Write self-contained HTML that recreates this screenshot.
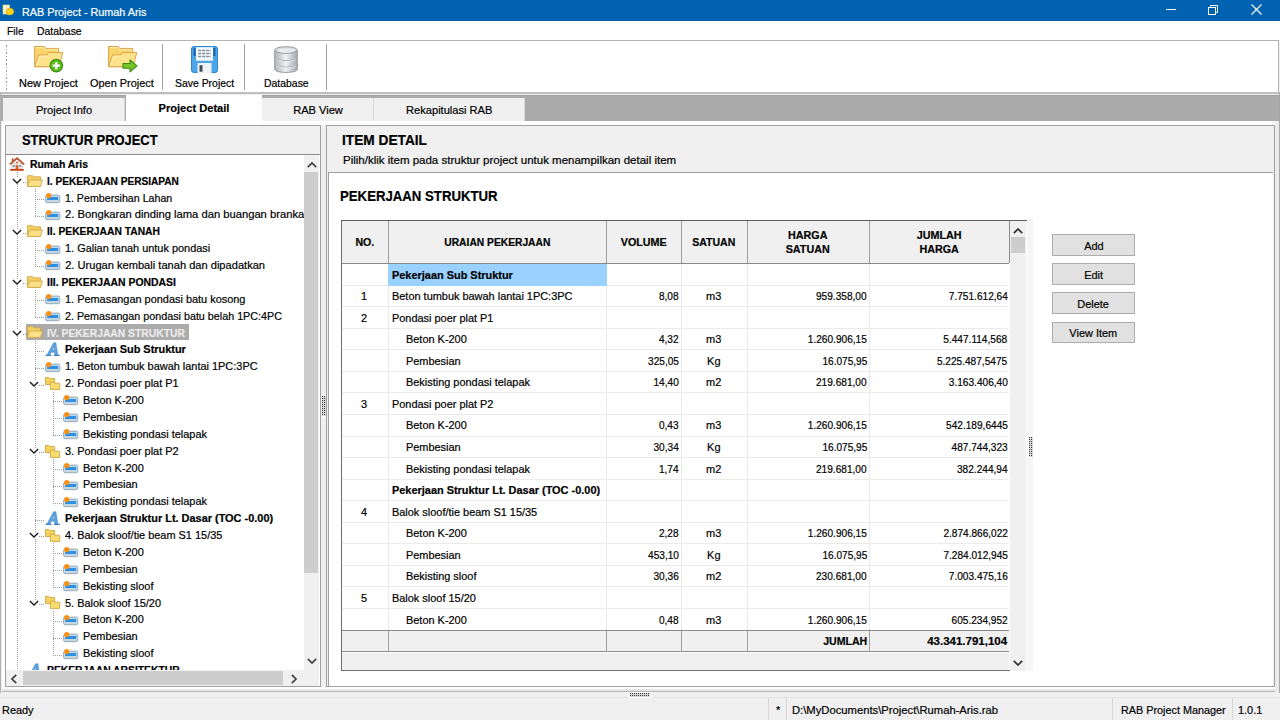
<!DOCTYPE html>
<html><head><meta charset="utf-8"><style>
*{margin:0;padding:0;box-sizing:border-box}
html,body{width:1280px;height:720px;overflow:hidden;background:#f0f0f0;font-family:"Liberation Sans",sans-serif;font-size:11.1px;color:#000}
.a{position:absolute}
.t{position:absolute;white-space:nowrap;line-height:1;-webkit-text-stroke:0.2px currentColor}
svg{display:block}
</style></head><body>
<div class="a" style="left:0px;top:0px;width:1280px;height:21px;background:#0062b0"></div>
<svg class="a" style="left:2px;top:4px" width="14" height="12" viewBox="0 0 14 12">
<rect x="1" y="1" width="6.5" height="9" fill="#fbf3c4" stroke="#e8d890" stroke-width="0.6"/>
<ellipse cx="7.8" cy="7.6" rx="3.9" ry="3.4" fill="#f6d21a" stroke="#e0a810" stroke-width="0.6"/></svg>
<div class="t" style="left:22px;top:6.5px;color:#fff"><span style="display:inline-block;transform:scaleX(0.975);transform-origin:0 50%">RAB Project - Rumah Aris</span></div>
<div class="a" style="left:1166px;top:9px;width:10px;height:1px;background:#fff"></div>
<svg class="a" style="left:1207px;top:4px" width="12" height="11" viewBox="0 0 12 11">
<rect x="1.5" y="3.5" width="7" height="7" fill="none" stroke="#fff"/><path d="M3.5 3.5V1.5h7v7h-2" fill="none" stroke="#fff"/></svg>
<svg class="a" style="left:1251px;top:4px" width="11" height="11" viewBox="0 0 11 11">
<path d="M0.5 0.5L10.5 10.5M10.5 0.5L0.5 10.5" stroke="#fff" stroke-width="1.1"/></svg>
<div class="a" style="left:0px;top:21px;width:1280px;height:19px;background:#fff"></div>
<div class="t" style="left:7px;top:26.1px"><span style="display:inline-block;transform:scaleX(0.93);transform-origin:0 50%">File</span></div>
<div class="t" style="left:37px;top:26.1px"><span style="display:inline-block;transform:scaleX(0.94);transform-origin:0 50%">Database</span></div>
<div class="a" style="left:0px;top:40px;width:1279px;height:52px;background:#fff;border-top:1px solid #b4b4b4;border-right:1px solid #b4b4b4"></div>
<div class="a" style="left:0px;top:92px;width:1280px;height:2px;background:#bebebe"></div>
<div class="a" style="left:6px;top:45px;width:1px;height:1.6px;background:#9a9a9a"></div>
<div class="a" style="left:6px;top:48.6px;width:1px;height:1.6px;background:#9a9a9a"></div>
<div class="a" style="left:6px;top:52.2px;width:1px;height:1.6px;background:#9a9a9a"></div>
<div class="a" style="left:6px;top:55.8px;width:1px;height:1.6px;background:#9a9a9a"></div>
<div class="a" style="left:6px;top:59.4px;width:1px;height:1.6px;background:#9a9a9a"></div>
<div class="a" style="left:6px;top:63px;width:1px;height:1.6px;background:#9a9a9a"></div>
<div class="a" style="left:6px;top:66.6px;width:1px;height:1.6px;background:#9a9a9a"></div>
<div class="a" style="left:6px;top:70.2px;width:1px;height:1.6px;background:#9a9a9a"></div>
<div class="a" style="left:6px;top:73.8px;width:1px;height:1.6px;background:#9a9a9a"></div>
<div class="a" style="left:6px;top:77.4px;width:1px;height:1.6px;background:#9a9a9a"></div>
<div class="a" style="left:6px;top:81px;width:1px;height:1.6px;background:#9a9a9a"></div>
<div class="a" style="left:6px;top:84.6px;width:1px;height:1.6px;background:#9a9a9a"></div>
<div class="a" style="left:6px;top:88.2px;width:1px;height:1.6px;background:#9a9a9a"></div>
<div class="a" style="left:162px;top:44px;width:1px;height:46px;background:#a0a0a0"></div>
<div class="a" style="left:244px;top:44px;width:1px;height:46px;background:#a0a0a0"></div>
<div class="a" style="left:326px;top:44px;width:1px;height:46px;background:#a0a0a0"></div>
<div class="t" style="left:19px;top:77.8px"><span style="display:inline-block;transform:scaleX(0.985);transform-origin:0 50%">New Project</span></div>
<div class="t" style="left:90px;top:77.8px"><span style="display:inline-block;transform:scaleX(0.985);transform-origin:0 50%">Open Project</span></div>
<div class="t" style="left:174.5px;top:77.8px"><span style="display:inline-block;transform:scaleX(0.94);transform-origin:0 50%">Save Project</span></div>
<div class="t" style="left:263.5px;top:77.8px"><span style="display:inline-block;transform:scaleX(0.94);transform-origin:0 50%">Database</span></div>
<svg class="a" style="left:34px;top:45px" width="31" height="29" viewBox="0 0 31 29"><path d="M0.6 1.5h9.6l1.6 1.9h12.9v18.3H0.6z" fill="#f8d46a" stroke="#dca548" stroke-width="1"/>
<path d="M1.8 2.7h8l1.6 1.9h12v3" fill="none" stroke="#fdeeb8" stroke-width="1"/>
<path d="M0.6 21.7L4.6 10h8.2l1.4-2.4h14.6L25 21.7z" fill="#fde38c" stroke="#dca548" stroke-width="1"/>
<path d="M2.2 20.5L5.4 11.2h8" fill="none" stroke="#fff3c8" stroke-width="0.9"/>
<circle cx="22.3" cy="20.6" r="6.3" fill="#5cb81c" stroke="#3a8a10" stroke-width="1.1"/>
<path d="M22.3 16.9v7.4M18.6 20.6h7.4" stroke="#fff" stroke-width="2.3"/></svg>
<svg class="a" style="left:108px;top:45px" width="31" height="29" viewBox="0 0 31 29"><path d="M0.6 1.5h9.6l1.6 1.9h12.9v18.3H0.6z" fill="#f8d46a" stroke="#dca548" stroke-width="1"/>
<path d="M1.8 2.7h8l1.6 1.9h12v3" fill="none" stroke="#fdeeb8" stroke-width="1"/>
<path d="M0.6 21.7L4.6 10h8.2l1.4-2.4h14.6L25 21.7z" fill="#fde38c" stroke="#dca548" stroke-width="1"/>
<path d="M2.2 20.5L5.4 11.2h8" fill="none" stroke="#fff3c8" stroke-width="0.9"/>
<path d="M15 18.5h7v-3.6l7 6-7 6v-3.6h-7z" fill="#74c42a" stroke="#3a8a10" stroke-width="1.1" stroke-linejoin="round"/></svg>
<svg class="a" style="left:191px;top:45.5px" width="27" height="27" viewBox="0 0 27 27">
<rect x="0.5" y="0.5" width="26" height="26" rx="2.5" fill="#4aa6e8" stroke="#2f86cc"/>
<rect x="2.5" y="2" width="2.2" height="8" fill="#1f62a8"/><rect x="22.3" y="2" width="2.2" height="8" fill="#1f62a8"/>
<rect x="5" y="1.2" width="17" height="13.5" fill="#f7fafc"/>
<path d="M7 4.5h13M7 7.5h13M7 10.5h13" stroke="#7f8f9c" stroke-width="1.3" stroke-dasharray="3.2 0.9"/>
<rect x="6.5" y="17" width="14" height="10" fill="#eef2f5"/>
<rect x="8.5" y="19.2" width="3" height="6.5" fill="#3e4a54"/></svg>
<svg class="a" style="left:274px;top:46px" width="24" height="27" viewBox="0 0 24 27">
<defs><linearGradient id="dg" x1="0" x2="1"><stop offset="0" stop-color="#b0b5ba"/><stop offset="0.5" stop-color="#eef0f2"/><stop offset="1" stop-color="#a4a9ae"/></linearGradient></defs>
<path d="M0.7 4v19.2c0 2 5 3.2 11.3 3.2s11.3-1.2 11.3-3.2V4" fill="url(#dg)" stroke="#8f9499" stroke-width="0.9"/>
<ellipse cx="12" cy="4" rx="11.3" ry="3.3" fill="#d8dcdf" stroke="#8f9499" stroke-width="0.9"/>
<ellipse cx="12" cy="4.6" rx="9" ry="2" fill="#e9ecee"/>
<path d="M0.7 11.4c0 2 5 3.2 11.3 3.2s11.3-1.2 11.3-3.2M0.7 18c0 2 5 3.2 11.3 3.2s11.3-1.2 11.3-3.2" fill="none" stroke="#8f9499" stroke-width="1"/>
<path d="M1.5 12.6c1.5 1.6 5 2.6 10.5 2.6s9-1 10.5-2.6M1.5 19.2c1.5 1.6 5 2.6 10.5 2.6s9-1 10.5-2.6" fill="none" stroke="#f4f6f7" stroke-width="0.8"/></svg>
<div class="a" style="left:0px;top:94px;width:1280px;height:1px;background:#eeeeee"></div>
<div class="a" style="left:0px;top:95px;width:1280px;height:26px;background:#ababab"></div>
<div class="a" style="left:0px;top:95px;width:1280px;height:1px;background:#a2a2a2"></div>
<div class="a" style="left:0px;top:93px;width:1.3px;height:600px;background:#b0b0b0"></div>
<div class="a" style="left:3px;top:97.5px;width:122px;height:23.5px;background:#f0f0f0;border-right:1px solid #d9d9d9"></div>
<div class="t" style="left:3px;top:105.1px;width:122px;text-align:center">Project Info</div>
<div class="a" style="left:126px;top:95px;width:136px;height:28px;background:#fff"></div>
<div class="t" style="left:126px;top:103.3px;width:136px;text-align:center;font-weight:bold">Project Detail</div>
<div class="a" style="left:262px;top:97.5px;width:112px;height:23.5px;background:#f0f0f0;border-right:1px solid #d9d9d9"></div>
<div class="t" style="left:262px;top:105.1px;width:112px;text-align:center">RAB View</div>
<div class="a" style="left:374px;top:97.5px;width:150.5px;height:23.5px;background:#f0f0f0;border-right:1px solid #d9d9d9"></div>
<div class="t" style="left:374px;top:105.1px;width:150.5px;text-align:center">Rekapitulasi RAB</div>
<div class="a" style="left:2px;top:121px;width:1277px;height:571px;background:#fff;border-bottom:1px solid #b8b8b8"></div>
<div class="a" style="left:2px;top:689px;width:1277px;height:2px;background:#e6e6e6"></div>
<div class="a" style="left:5px;top:125px;width:316px;height:562px;background:#fff;border:1px solid #a0a0a0"></div>
<div class="a" style="left:6px;top:126px;width:314px;height:29px;background:#f0f0f0;border-bottom:1px solid #8c8c8c"></div>
<div class="t" style="left:22px;top:132.9px;font-size:14.1px;font-weight:bold"><span style="display:inline-block;transform:scaleX(0.916);transform-origin:0 50%">STRUKTUR PROJECT</span></div>
<div class="a" style="left:6px;top:155px;width:298px;height:515px;overflow:hidden">
<div class="a" style="left:11.1px;top:17.18px;width:1px;height:499.31px;background-image:linear-gradient(#9c9c9c 50%,transparent 50%);background-size:1px 2px"></div>
<div class="a" style="left:28.9px;top:34.05px;width:1px;height:26.81px;background-image:linear-gradient(#9c9c9c 50%,transparent 50%);background-size:1px 2px"></div>
<div class="a" style="left:28.9px;top:84.68px;width:1px;height:26.81px;background-image:linear-gradient(#9c9c9c 50%,transparent 50%);background-size:1px 2px"></div>
<div class="a" style="left:28.9px;top:135.3px;width:1px;height:26.81px;background-image:linear-gradient(#9c9c9c 50%,transparent 50%);background-size:1px 2px"></div>
<div class="a" style="left:28.9px;top:185.93px;width:1px;height:263.06px;background-image:linear-gradient(#9c9c9c 50%,transparent 50%);background-size:1px 2px"></div>
<div class="a" style="left:46.7px;top:236.55px;width:1px;height:43.69px;background-image:linear-gradient(#9c9c9c 50%,transparent 50%);background-size:1px 2px"></div>
<div class="a" style="left:46.7px;top:304.05px;width:1px;height:43.69px;background-image:linear-gradient(#9c9c9c 50%,transparent 50%);background-size:1px 2px"></div>
<div class="a" style="left:46.7px;top:388.42px;width:1px;height:43.69px;background-image:linear-gradient(#9c9c9c 50%,transparent 50%);background-size:1px 2px"></div>
<div class="a" style="left:46.7px;top:455.92px;width:1px;height:43.69px;background-image:linear-gradient(#9c9c9c 50%,transparent 50%);background-size:1px 2px"></div>
<div class="a" style="left:11.1px;top:27.11px;width:9.8px;height:1px;background-image:linear-gradient(90deg,#9c9c9c 50%,transparent 50%);background-size:2px 1px"></div>
<div class="a" style="left:28.9px;top:43.99px;width:9.8px;height:1px;background-image:linear-gradient(90deg,#9c9c9c 50%,transparent 50%);background-size:2px 1px"></div>
<div class="a" style="left:28.9px;top:60.86px;width:9.8px;height:1px;background-image:linear-gradient(90deg,#9c9c9c 50%,transparent 50%);background-size:2px 1px"></div>
<div class="a" style="left:11.1px;top:77.74px;width:9.8px;height:1px;background-image:linear-gradient(90deg,#9c9c9c 50%,transparent 50%);background-size:2px 1px"></div>
<div class="a" style="left:28.9px;top:94.61px;width:9.8px;height:1px;background-image:linear-gradient(90deg,#9c9c9c 50%,transparent 50%);background-size:2px 1px"></div>
<div class="a" style="left:28.9px;top:111.49px;width:9.8px;height:1px;background-image:linear-gradient(90deg,#9c9c9c 50%,transparent 50%);background-size:2px 1px"></div>
<div class="a" style="left:11.1px;top:128.36px;width:9.8px;height:1px;background-image:linear-gradient(90deg,#9c9c9c 50%,transparent 50%);background-size:2px 1px"></div>
<div class="a" style="left:28.9px;top:145.24px;width:9.8px;height:1px;background-image:linear-gradient(90deg,#9c9c9c 50%,transparent 50%);background-size:2px 1px"></div>
<div class="a" style="left:28.9px;top:162.11px;width:9.8px;height:1px;background-image:linear-gradient(90deg,#9c9c9c 50%,transparent 50%);background-size:2px 1px"></div>
<div class="a" style="left:11.1px;top:178.99px;width:9.8px;height:1px;background-image:linear-gradient(90deg,#9c9c9c 50%,transparent 50%);background-size:2px 1px"></div>
<div class="a" style="left:28.9px;top:195.86px;width:9.8px;height:1px;background-image:linear-gradient(90deg,#9c9c9c 50%,transparent 50%);background-size:2px 1px"></div>
<div class="a" style="left:28.9px;top:212.74px;width:9.8px;height:1px;background-image:linear-gradient(90deg,#9c9c9c 50%,transparent 50%);background-size:2px 1px"></div>
<div class="a" style="left:28.9px;top:229.61px;width:9.8px;height:1px;background-image:linear-gradient(90deg,#9c9c9c 50%,transparent 50%);background-size:2px 1px"></div>
<div class="a" style="left:46.7px;top:246.49px;width:9.8px;height:1px;background-image:linear-gradient(90deg,#9c9c9c 50%,transparent 50%);background-size:2px 1px"></div>
<div class="a" style="left:46.7px;top:263.36px;width:9.8px;height:1px;background-image:linear-gradient(90deg,#9c9c9c 50%,transparent 50%);background-size:2px 1px"></div>
<div class="a" style="left:46.7px;top:280.24px;width:9.8px;height:1px;background-image:linear-gradient(90deg,#9c9c9c 50%,transparent 50%);background-size:2px 1px"></div>
<div class="a" style="left:28.9px;top:297.11px;width:9.8px;height:1px;background-image:linear-gradient(90deg,#9c9c9c 50%,transparent 50%);background-size:2px 1px"></div>
<div class="a" style="left:46.7px;top:313.99px;width:9.8px;height:1px;background-image:linear-gradient(90deg,#9c9c9c 50%,transparent 50%);background-size:2px 1px"></div>
<div class="a" style="left:46.7px;top:330.86px;width:9.8px;height:1px;background-image:linear-gradient(90deg,#9c9c9c 50%,transparent 50%);background-size:2px 1px"></div>
<div class="a" style="left:46.7px;top:347.74px;width:9.8px;height:1px;background-image:linear-gradient(90deg,#9c9c9c 50%,transparent 50%);background-size:2px 1px"></div>
<div class="a" style="left:28.9px;top:364.61px;width:9.8px;height:1px;background-image:linear-gradient(90deg,#9c9c9c 50%,transparent 50%);background-size:2px 1px"></div>
<div class="a" style="left:28.9px;top:381.49px;width:9.8px;height:1px;background-image:linear-gradient(90deg,#9c9c9c 50%,transparent 50%);background-size:2px 1px"></div>
<div class="a" style="left:46.7px;top:398.36px;width:9.8px;height:1px;background-image:linear-gradient(90deg,#9c9c9c 50%,transparent 50%);background-size:2px 1px"></div>
<div class="a" style="left:46.7px;top:415.24px;width:9.8px;height:1px;background-image:linear-gradient(90deg,#9c9c9c 50%,transparent 50%);background-size:2px 1px"></div>
<div class="a" style="left:46.7px;top:432.11px;width:9.8px;height:1px;background-image:linear-gradient(90deg,#9c9c9c 50%,transparent 50%);background-size:2px 1px"></div>
<div class="a" style="left:28.9px;top:448.99px;width:9.8px;height:1px;background-image:linear-gradient(90deg,#9c9c9c 50%,transparent 50%);background-size:2px 1px"></div>
<div class="a" style="left:46.7px;top:465.86px;width:9.8px;height:1px;background-image:linear-gradient(90deg,#9c9c9c 50%,transparent 50%);background-size:2px 1px"></div>
<div class="a" style="left:46.7px;top:482.74px;width:9.8px;height:1px;background-image:linear-gradient(90deg,#9c9c9c 50%,transparent 50%);background-size:2px 1px"></div>
<div class="a" style="left:46.7px;top:499.61px;width:9.8px;height:1px;background-image:linear-gradient(90deg,#9c9c9c 50%,transparent 50%);background-size:2px 1px"></div>
<div class="a" style="left:11.1px;top:516.49px;width:9.8px;height:1px;background-image:linear-gradient(90deg,#9c9c9c 50%,transparent 50%);background-size:2px 1px"></div>
<div class="a" style="left:3.1px;top:1.74px"><svg width="16" height="14" viewBox="0 0 16 14"><path d="M2.8 6.5h10.4V12H2.8z" fill="#f6f1ea" stroke="#cdb49a" stroke-width="0.6"/><path d="M0.8 7.4L8 1.2l7.2 6.2" fill="none" stroke="#b4552b" stroke-width="1.8"/><rect x="2.8" y="1.4" width="1.8" height="3.4" fill="#b4552b"/><rect x="6.6" y="8" width="2.8" height="4" fill="#d9652b"/><rect x="3.8" y="8" width="2" height="2" fill="#6f94bd"/><rect x="10.2" y="8" width="2" height="2" fill="#6f94bd"/><circle cx="8" cy="5.3" r="0.9" fill="#c23a2a"/><rect x="1.2" y="12" width="13.6" height="1.8" fill="#c7461f"/></svg></div>
<div class="t" style="left:23.6px;top:0.8px;font-weight:bold;line-height:16.88px"><span style="display:inline-block;transform:scaleX(0.938);transform-origin:0 50%">Rumah Aris</span></div>
<div class="a" style="left:20.9px;top:19.61px"><svg width="16" height="12" viewBox="0 0 16 12"><path d="M0.5 0.6h5.2l1.2 1.2h6.6v9.6H0.5z" fill="#f3cf62" stroke="#cfa342" stroke-width="0.8"/><path d="M0.5 11.4l2.1-6.4h12.9l-2 6.4z" fill="#fbe08a" stroke="#cfa342" stroke-width="0.8"/></svg></div>
<div class="a" style="left:5.6px;top:23.11px;background:#fff"><svg width="10" height="6" viewBox="0 0 10 6"><path d="M0.9 0.9L5 5 9.1 0.9" fill="none" stroke="#1e1e1e" stroke-width="1.4"/></svg></div>
<div class="t" style="left:41.4px;top:17.68px;font-weight:bold;line-height:16.88px"><span style="display:inline-block;transform:scaleX(0.912);transform-origin:0 50%">I. PEKERJAAN PERSIAPAN</span></div>
<div class="a" style="left:38.7px;top:36.99px"><svg width="16" height="12" viewBox="0 0 16 12"><rect x="0.6" y="3.1" width="14.2" height="7.6" rx="1.4" fill="#c4d6e2" stroke="#8ea4b4" stroke-width="0.9"/><rect x="1.5" y="4" width="12.4" height="4" fill="#d8f0fb"/><rect x="2.1" y="4.8" width="11.2" height="3.2" fill="#2f8fe0"/><circle cx="3.7" cy="3.6" r="2.6" fill="#fb8f12"/></svg></div>
<div class="t" style="left:59.2px;top:34.55px;line-height:16.88px"><span style="display:inline-block;transform:scaleX(0.961);transform-origin:0 50%">1. Pembersihan Lahan</span></div>
<div class="a" style="left:38.7px;top:53.86px"><svg width="16" height="12" viewBox="0 0 16 12"><rect x="0.6" y="3.1" width="14.2" height="7.6" rx="1.4" fill="#c4d6e2" stroke="#8ea4b4" stroke-width="0.9"/><rect x="1.5" y="4" width="12.4" height="4" fill="#d8f0fb"/><rect x="2.1" y="4.8" width="11.2" height="3.2" fill="#2f8fe0"/><circle cx="3.7" cy="3.6" r="2.6" fill="#fb8f12"/></svg></div>
<div class="t" style="left:59.2px;top:51.43px;line-height:16.88px"><span style="display:inline-block;transform:scaleX(1.01);transform-origin:0 50%">2. Bongkaran dinding lama dan buangan branka</span></div>
<div class="a" style="left:20.9px;top:70.24px"><svg width="16" height="12" viewBox="0 0 16 12"><path d="M0.5 0.6h5.2l1.2 1.2h6.6v9.6H0.5z" fill="#f3cf62" stroke="#cfa342" stroke-width="0.8"/><path d="M0.5 11.4l2.1-6.4h12.9l-2 6.4z" fill="#fbe08a" stroke="#cfa342" stroke-width="0.8"/></svg></div>
<div class="a" style="left:5.6px;top:73.74px;background:#fff"><svg width="10" height="6" viewBox="0 0 10 6"><path d="M0.9 0.9L5 5 9.1 0.9" fill="none" stroke="#1e1e1e" stroke-width="1.4"/></svg></div>
<div class="t" style="left:41.4px;top:68.3px;font-weight:bold;line-height:16.88px"><span style="display:inline-block;transform:scaleX(0.927);transform-origin:0 50%">II. PEKERJAAN TANAH</span></div>
<div class="a" style="left:38.7px;top:87.61px"><svg width="16" height="12" viewBox="0 0 16 12"><rect x="0.6" y="3.1" width="14.2" height="7.6" rx="1.4" fill="#c4d6e2" stroke="#8ea4b4" stroke-width="0.9"/><rect x="1.5" y="4" width="12.4" height="4" fill="#d8f0fb"/><rect x="2.1" y="4.8" width="11.2" height="3.2" fill="#2f8fe0"/><circle cx="3.7" cy="3.6" r="2.6" fill="#fb8f12"/></svg></div>
<div class="t" style="left:59.2px;top:85.18px;line-height:16.88px"><span style="display:inline-block;transform:scaleX(0.985);transform-origin:0 50%">1. Galian tanah untuk pondasi</span></div>
<div class="a" style="left:38.7px;top:104.49px"><svg width="16" height="12" viewBox="0 0 16 12"><rect x="0.6" y="3.1" width="14.2" height="7.6" rx="1.4" fill="#c4d6e2" stroke="#8ea4b4" stroke-width="0.9"/><rect x="1.5" y="4" width="12.4" height="4" fill="#d8f0fb"/><rect x="2.1" y="4.8" width="11.2" height="3.2" fill="#2f8fe0"/><circle cx="3.7" cy="3.6" r="2.6" fill="#fb8f12"/></svg></div>
<div class="t" style="left:59.2px;top:102.05px;line-height:16.88px">2. Urugan kembali tanah dan dipadatkan</div>
<div class="a" style="left:20.9px;top:120.86px"><svg width="16" height="12" viewBox="0 0 16 12"><path d="M0.5 0.6h5.2l1.2 1.2h6.6v9.6H0.5z" fill="#f3cf62" stroke="#cfa342" stroke-width="0.8"/><path d="M0.5 11.4l2.1-6.4h12.9l-2 6.4z" fill="#fbe08a" stroke="#cfa342" stroke-width="0.8"/></svg></div>
<div class="a" style="left:5.6px;top:124.36px;background:#fff"><svg width="10" height="6" viewBox="0 0 10 6"><path d="M0.9 0.9L5 5 9.1 0.9" fill="none" stroke="#1e1e1e" stroke-width="1.4"/></svg></div>
<div class="t" style="left:41.4px;top:118.93px;font-weight:bold;line-height:16.88px"><span style="display:inline-block;transform:scaleX(0.938);transform-origin:0 50%">III. PEKERJAAN PONDASI</span></div>
<div class="a" style="left:38.7px;top:138.24px"><svg width="16" height="12" viewBox="0 0 16 12"><rect x="0.6" y="3.1" width="14.2" height="7.6" rx="1.4" fill="#c4d6e2" stroke="#8ea4b4" stroke-width="0.9"/><rect x="1.5" y="4" width="12.4" height="4" fill="#d8f0fb"/><rect x="2.1" y="4.8" width="11.2" height="3.2" fill="#2f8fe0"/><circle cx="3.7" cy="3.6" r="2.6" fill="#fb8f12"/></svg></div>
<div class="t" style="left:59.2px;top:135.8px;line-height:16.88px"><span style="display:inline-block;transform:scaleX(0.985);transform-origin:0 50%">1. Pemasangan pondasi batu kosong</span></div>
<div class="a" style="left:38.7px;top:155.11px"><svg width="16" height="12" viewBox="0 0 16 12"><rect x="0.6" y="3.1" width="14.2" height="7.6" rx="1.4" fill="#c4d6e2" stroke="#8ea4b4" stroke-width="0.9"/><rect x="1.5" y="4" width="12.4" height="4" fill="#d8f0fb"/><rect x="2.1" y="4.8" width="11.2" height="3.2" fill="#2f8fe0"/><circle cx="3.7" cy="3.6" r="2.6" fill="#fb8f12"/></svg></div>
<div class="t" style="left:59.2px;top:152.68px;line-height:16.88px"><span style="display:inline-block;transform:scaleX(0.969);transform-origin:0 50%">2. Pemasangan pondasi batu belah 1PC:4PC</span></div>
<div class="a" style="left:19.5px;top:169.35px;width:163.5px;height:15.68px;background:#ababab"></div>
<div class="a" style="left:20.9px;top:171.49px"><svg width="16" height="12" viewBox="0 0 16 12"><path d="M0.5 0.6h5.2l1.2 1.2h6.6v9.6H0.5z" fill="#f3cf62" stroke="#cfa342" stroke-width="0.8"/><path d="M0.5 11.4l2.1-6.4h12.9l-2 6.4z" fill="#fbe08a" stroke="#cfa342" stroke-width="0.8"/></svg></div>
<div class="a" style="left:5.6px;top:174.99px;background:#fff"><svg width="10" height="6" viewBox="0 0 10 6"><path d="M0.9 0.9L5 5 9.1 0.9" fill="none" stroke="#1e1e1e" stroke-width="1.4"/></svg></div>
<div class="t" style="left:41.4px;top:169.55px;font-weight:bold;color:#ececec;line-height:16.88px"><span style="display:inline-block;transform:scaleX(0.931);transform-origin:0 50%">IV. PEKERJAAN STRUKTUR</span></div>
<div class="a" style="left:38.7px;top:187.36px"><svg width="16" height="14" viewBox="0 0 16 14"><path d="M1.8 13.3L8.6 0.8h2.3l1.9 12.5H9.9l-0.45-3.1H6.3l-1.6 3.1zM7.3 8.1h2l-0.55-4.3z" fill="#5da3e3" stroke="#3c80c6" stroke-width="0.5"/><path d="M0.6 13.4h6M8.8 13.4h6" stroke="#3c80c6" stroke-width="1.1"/></svg></div>
<div class="t" style="left:59.2px;top:186.43px;font-weight:bold;line-height:16.88px"><span style="display:inline-block;transform:scaleX(0.985);transform-origin:0 50%">Pekerjaan Sub Struktur</span></div>
<div class="a" style="left:38.7px;top:205.74px"><svg width="16" height="12" viewBox="0 0 16 12"><rect x="0.6" y="3.1" width="14.2" height="7.6" rx="1.4" fill="#c4d6e2" stroke="#8ea4b4" stroke-width="0.9"/><rect x="1.5" y="4" width="12.4" height="4" fill="#d8f0fb"/><rect x="2.1" y="4.8" width="11.2" height="3.2" fill="#2f8fe0"/><circle cx="3.7" cy="3.6" r="2.6" fill="#fb8f12"/></svg></div>
<div class="t" style="left:59.2px;top:203.3px;line-height:16.88px"><span style="display:inline-block;transform:scaleX(0.985);transform-origin:0 50%">1. Beton tumbuk bawah lantai 1PC:3PC</span></div>
<div class="a" style="left:38.7px;top:222.11px"><svg width="16" height="13" viewBox="0 0 16 13"><path d="M0.5 0.5h3.4l1 1h4.8v6H0.5z" fill="#f6d35e" stroke="#c79e3c" stroke-width="0.8"/><path d="M5.3 5.2h3.4l1 1h5v6.2H5.3z" fill="#f9dc70" stroke="#c79e3c" stroke-width="0.8"/></svg></div>
<div class="a" style="left:23.4px;top:225.61px;background:#fff"><svg width="10" height="6" viewBox="0 0 10 6"><path d="M0.9 0.9L5 5 9.1 0.9" fill="none" stroke="#1e1e1e" stroke-width="1.4"/></svg></div>
<div class="t" style="left:59.2px;top:220.18px;line-height:16.88px"><span style="display:inline-block;transform:scaleX(0.985);transform-origin:0 50%">2. Pondasi poer plat P1</span></div>
<div class="a" style="left:56.5px;top:239.49px"><svg width="16" height="12" viewBox="0 0 16 12"><rect x="0.6" y="3.1" width="14.2" height="7.6" rx="1.4" fill="#c4d6e2" stroke="#8ea4b4" stroke-width="0.9"/><rect x="1.5" y="4" width="12.4" height="4" fill="#d8f0fb"/><rect x="2.1" y="4.8" width="11.2" height="3.2" fill="#2f8fe0"/><circle cx="3.7" cy="3.6" r="2.6" fill="#fb8f12"/></svg></div>
<div class="t" style="left:77px;top:237.05px;line-height:16.88px"><span style="display:inline-block;transform:scaleX(0.985);transform-origin:0 50%">Beton K-200</span></div>
<div class="a" style="left:56.5px;top:256.36px"><svg width="16" height="12" viewBox="0 0 16 12"><rect x="0.6" y="3.1" width="14.2" height="7.6" rx="1.4" fill="#c4d6e2" stroke="#8ea4b4" stroke-width="0.9"/><rect x="1.5" y="4" width="12.4" height="4" fill="#d8f0fb"/><rect x="2.1" y="4.8" width="11.2" height="3.2" fill="#2f8fe0"/><circle cx="3.7" cy="3.6" r="2.6" fill="#fb8f12"/></svg></div>
<div class="t" style="left:77px;top:253.93px;line-height:16.88px"><span style="display:inline-block;transform:scaleX(0.985);transform-origin:0 50%">Pembesian</span></div>
<div class="a" style="left:56.5px;top:273.24px"><svg width="16" height="12" viewBox="0 0 16 12"><rect x="0.6" y="3.1" width="14.2" height="7.6" rx="1.4" fill="#c4d6e2" stroke="#8ea4b4" stroke-width="0.9"/><rect x="1.5" y="4" width="12.4" height="4" fill="#d8f0fb"/><rect x="2.1" y="4.8" width="11.2" height="3.2" fill="#2f8fe0"/><circle cx="3.7" cy="3.6" r="2.6" fill="#fb8f12"/></svg></div>
<div class="t" style="left:77px;top:270.8px;line-height:16.88px"><span style="display:inline-block;transform:scaleX(0.985);transform-origin:0 50%">Bekisting pondasi telapak</span></div>
<div class="a" style="left:38.7px;top:289.61px"><svg width="16" height="13" viewBox="0 0 16 13"><path d="M0.5 0.5h3.4l1 1h4.8v6H0.5z" fill="#f6d35e" stroke="#c79e3c" stroke-width="0.8"/><path d="M5.3 5.2h3.4l1 1h5v6.2H5.3z" fill="#f9dc70" stroke="#c79e3c" stroke-width="0.8"/></svg></div>
<div class="a" style="left:23.4px;top:293.11px;background:#fff"><svg width="10" height="6" viewBox="0 0 10 6"><path d="M0.9 0.9L5 5 9.1 0.9" fill="none" stroke="#1e1e1e" stroke-width="1.4"/></svg></div>
<div class="t" style="left:59.2px;top:287.68px;line-height:16.88px"><span style="display:inline-block;transform:scaleX(0.985);transform-origin:0 50%">3. Pondasi poer plat P2</span></div>
<div class="a" style="left:56.5px;top:306.99px"><svg width="16" height="12" viewBox="0 0 16 12"><rect x="0.6" y="3.1" width="14.2" height="7.6" rx="1.4" fill="#c4d6e2" stroke="#8ea4b4" stroke-width="0.9"/><rect x="1.5" y="4" width="12.4" height="4" fill="#d8f0fb"/><rect x="2.1" y="4.8" width="11.2" height="3.2" fill="#2f8fe0"/><circle cx="3.7" cy="3.6" r="2.6" fill="#fb8f12"/></svg></div>
<div class="t" style="left:77px;top:304.55px;line-height:16.88px"><span style="display:inline-block;transform:scaleX(0.985);transform-origin:0 50%">Beton K-200</span></div>
<div class="a" style="left:56.5px;top:323.86px"><svg width="16" height="12" viewBox="0 0 16 12"><rect x="0.6" y="3.1" width="14.2" height="7.6" rx="1.4" fill="#c4d6e2" stroke="#8ea4b4" stroke-width="0.9"/><rect x="1.5" y="4" width="12.4" height="4" fill="#d8f0fb"/><rect x="2.1" y="4.8" width="11.2" height="3.2" fill="#2f8fe0"/><circle cx="3.7" cy="3.6" r="2.6" fill="#fb8f12"/></svg></div>
<div class="t" style="left:77px;top:321.43px;line-height:16.88px"><span style="display:inline-block;transform:scaleX(0.985);transform-origin:0 50%">Pembesian</span></div>
<div class="a" style="left:56.5px;top:340.74px"><svg width="16" height="12" viewBox="0 0 16 12"><rect x="0.6" y="3.1" width="14.2" height="7.6" rx="1.4" fill="#c4d6e2" stroke="#8ea4b4" stroke-width="0.9"/><rect x="1.5" y="4" width="12.4" height="4" fill="#d8f0fb"/><rect x="2.1" y="4.8" width="11.2" height="3.2" fill="#2f8fe0"/><circle cx="3.7" cy="3.6" r="2.6" fill="#fb8f12"/></svg></div>
<div class="t" style="left:77px;top:338.3px;line-height:16.88px"><span style="display:inline-block;transform:scaleX(0.985);transform-origin:0 50%">Bekisting pondasi telapak</span></div>
<div class="a" style="left:38.7px;top:356.11px"><svg width="16" height="14" viewBox="0 0 16 14"><path d="M1.8 13.3L8.6 0.8h2.3l1.9 12.5H9.9l-0.45-3.1H6.3l-1.6 3.1zM7.3 8.1h2l-0.55-4.3z" fill="#5da3e3" stroke="#3c80c6" stroke-width="0.5"/><path d="M0.6 13.4h6M8.8 13.4h6" stroke="#3c80c6" stroke-width="1.1"/></svg></div>
<div class="t" style="left:59.2px;top:355.18px;font-weight:bold;line-height:16.88px"><span style="display:inline-block;transform:scaleX(0.985);transform-origin:0 50%">Pekerjaan Struktur Lt. Dasar (TOC -0.00)</span></div>
<div class="a" style="left:38.7px;top:373.99px"><svg width="16" height="13" viewBox="0 0 16 13"><path d="M0.5 0.5h3.4l1 1h4.8v6H0.5z" fill="#f6d35e" stroke="#c79e3c" stroke-width="0.8"/><path d="M5.3 5.2h3.4l1 1h5v6.2H5.3z" fill="#f9dc70" stroke="#c79e3c" stroke-width="0.8"/></svg></div>
<div class="a" style="left:23.4px;top:377.49px;background:#fff"><svg width="10" height="6" viewBox="0 0 10 6"><path d="M0.9 0.9L5 5 9.1 0.9" fill="none" stroke="#1e1e1e" stroke-width="1.4"/></svg></div>
<div class="t" style="left:59.2px;top:372.05px;line-height:16.88px"><span style="display:inline-block;transform:scaleX(0.985);transform-origin:0 50%">4. Balok sloof/tie beam S1 15/35</span></div>
<div class="a" style="left:56.5px;top:391.36px"><svg width="16" height="12" viewBox="0 0 16 12"><rect x="0.6" y="3.1" width="14.2" height="7.6" rx="1.4" fill="#c4d6e2" stroke="#8ea4b4" stroke-width="0.9"/><rect x="1.5" y="4" width="12.4" height="4" fill="#d8f0fb"/><rect x="2.1" y="4.8" width="11.2" height="3.2" fill="#2f8fe0"/><circle cx="3.7" cy="3.6" r="2.6" fill="#fb8f12"/></svg></div>
<div class="t" style="left:77px;top:388.93px;line-height:16.88px"><span style="display:inline-block;transform:scaleX(0.985);transform-origin:0 50%">Beton K-200</span></div>
<div class="a" style="left:56.5px;top:408.24px"><svg width="16" height="12" viewBox="0 0 16 12"><rect x="0.6" y="3.1" width="14.2" height="7.6" rx="1.4" fill="#c4d6e2" stroke="#8ea4b4" stroke-width="0.9"/><rect x="1.5" y="4" width="12.4" height="4" fill="#d8f0fb"/><rect x="2.1" y="4.8" width="11.2" height="3.2" fill="#2f8fe0"/><circle cx="3.7" cy="3.6" r="2.6" fill="#fb8f12"/></svg></div>
<div class="t" style="left:77px;top:405.8px;line-height:16.88px"><span style="display:inline-block;transform:scaleX(0.985);transform-origin:0 50%">Pembesian</span></div>
<div class="a" style="left:56.5px;top:425.11px"><svg width="16" height="12" viewBox="0 0 16 12"><rect x="0.6" y="3.1" width="14.2" height="7.6" rx="1.4" fill="#c4d6e2" stroke="#8ea4b4" stroke-width="0.9"/><rect x="1.5" y="4" width="12.4" height="4" fill="#d8f0fb"/><rect x="2.1" y="4.8" width="11.2" height="3.2" fill="#2f8fe0"/><circle cx="3.7" cy="3.6" r="2.6" fill="#fb8f12"/></svg></div>
<div class="t" style="left:77px;top:422.68px;line-height:16.88px"><span style="display:inline-block;transform:scaleX(0.985);transform-origin:0 50%">Bekisting sloof</span></div>
<div class="a" style="left:38.7px;top:441.49px"><svg width="16" height="13" viewBox="0 0 16 13"><path d="M0.5 0.5h3.4l1 1h4.8v6H0.5z" fill="#f6d35e" stroke="#c79e3c" stroke-width="0.8"/><path d="M5.3 5.2h3.4l1 1h5v6.2H5.3z" fill="#f9dc70" stroke="#c79e3c" stroke-width="0.8"/></svg></div>
<div class="a" style="left:23.4px;top:444.99px;background:#fff"><svg width="10" height="6" viewBox="0 0 10 6"><path d="M0.9 0.9L5 5 9.1 0.9" fill="none" stroke="#1e1e1e" stroke-width="1.4"/></svg></div>
<div class="t" style="left:59.2px;top:439.55px;line-height:16.88px"><span style="display:inline-block;transform:scaleX(0.985);transform-origin:0 50%">5. Balok sloof 15/20</span></div>
<div class="a" style="left:56.5px;top:458.86px"><svg width="16" height="12" viewBox="0 0 16 12"><rect x="0.6" y="3.1" width="14.2" height="7.6" rx="1.4" fill="#c4d6e2" stroke="#8ea4b4" stroke-width="0.9"/><rect x="1.5" y="4" width="12.4" height="4" fill="#d8f0fb"/><rect x="2.1" y="4.8" width="11.2" height="3.2" fill="#2f8fe0"/><circle cx="3.7" cy="3.6" r="2.6" fill="#fb8f12"/></svg></div>
<div class="t" style="left:77px;top:456.43px;line-height:16.88px"><span style="display:inline-block;transform:scaleX(0.985);transform-origin:0 50%">Beton K-200</span></div>
<div class="a" style="left:56.5px;top:475.74px"><svg width="16" height="12" viewBox="0 0 16 12"><rect x="0.6" y="3.1" width="14.2" height="7.6" rx="1.4" fill="#c4d6e2" stroke="#8ea4b4" stroke-width="0.9"/><rect x="1.5" y="4" width="12.4" height="4" fill="#d8f0fb"/><rect x="2.1" y="4.8" width="11.2" height="3.2" fill="#2f8fe0"/><circle cx="3.7" cy="3.6" r="2.6" fill="#fb8f12"/></svg></div>
<div class="t" style="left:77px;top:473.3px;line-height:16.88px"><span style="display:inline-block;transform:scaleX(0.985);transform-origin:0 50%">Pembesian</span></div>
<div class="a" style="left:56.5px;top:492.61px"><svg width="16" height="12" viewBox="0 0 16 12"><rect x="0.6" y="3.1" width="14.2" height="7.6" rx="1.4" fill="#c4d6e2" stroke="#8ea4b4" stroke-width="0.9"/><rect x="1.5" y="4" width="12.4" height="4" fill="#d8f0fb"/><rect x="2.1" y="4.8" width="11.2" height="3.2" fill="#2f8fe0"/><circle cx="3.7" cy="3.6" r="2.6" fill="#fb8f12"/></svg></div>
<div class="t" style="left:77px;top:490.18px;line-height:16.88px"><span style="display:inline-block;transform:scaleX(0.985);transform-origin:0 50%">Bekisting sloof</span></div>
<div class="a" style="left:20.9px;top:507.99px"><svg width="16" height="14" viewBox="0 0 16 14"><path d="M1.8 13.3L8.6 0.8h2.3l1.9 12.5H9.9l-0.45-3.1H6.3l-1.6 3.1zM7.3 8.1h2l-0.55-4.3z" fill="#5da3e3" stroke="#3c80c6" stroke-width="0.5"/><path d="M0.6 13.4h6M8.8 13.4h6" stroke="#3c80c6" stroke-width="1.1"/></svg></div>
<div class="t" style="left:41.4px;top:507.05px;font-weight:bold;line-height:16.88px"><span style="display:inline-block;transform:scaleX(0.93);transform-origin:0 50%">PEKERJAAN ARSITEKTUR</span></div>
</div>
<div class="a" style="left:304px;top:155px;width:15px;height:515px;background:#f0f0f0"></div>
<div class="a" style="left:304px;top:171.5px;width:14px;height:401px;background:#cdcdcd"></div>
<svg class="a" style="left:306.5px;top:162px" width="10" height="6" viewBox="0 0 10 6"><path d="M0.8 5.2L5 1 9.2 5.2" fill="none" stroke="#404040" stroke-width="1.7"/></svg>
<svg class="a" style="left:306.5px;top:657.5px" width="10" height="6" viewBox="0 0 10 6"><path d="M0.8 0.8L5 5 9.2 0.8" fill="none" stroke="#404040" stroke-width="1.7"/></svg>
<div class="a" style="left:6px;top:670px;width:313px;height:16px;background:#f0f0f0"></div>
<div class="a" style="left:22.5px;top:671px;width:260px;height:14px;background:#cdcdcd"></div>
<svg class="a" style="left:11px;top:673.5px" width="6" height="10" viewBox="0 0 6 10"><path d="M5.2 0.8L1 5 5.2 9.2" fill="none" stroke="#404040" stroke-width="1.7"/></svg>
<svg class="a" style="left:291px;top:673.5px" width="6" height="10" viewBox="0 0 6 10"><path d="M0.8 0.8L5 5 0.8 9.2" fill="none" stroke="#404040" stroke-width="1.7"/></svg>
<div class="a" style="left:321px;top:125px;width:5px;height:562px;background:#f0f0f0"></div>
<div class="a" style="left:321px;top:395px;width:5px;height:23px;background:#fafafa"></div>
<div class="a" style="left:322px;top:396px;width:4px;height:20px;background:linear-gradient(90deg,transparent 50%,#d8d8d8 50%),linear-gradient(transparent 50%,#d8d8d8 50%),#333;background-size:2px 2px"></div>
<div class="a" style="left:326px;top:125px;width:949px;height:562px;background:#f0f0f0;border:1px solid #a0a0a0"></div>
<div class="a" style="left:1275px;top:121px;width:4px;height:571px;background:#ececec"></div>
<div class="a" style="left:1279px;top:93px;width:1px;height:600px;background:#a8a8a8"></div>
<div class="t" style="left:342px;top:132.5px;font-size:14.1px;font-weight:bold"><span style="display:inline-block;transform:scaleX(0.972);transform-origin:0 50%">ITEM DETAIL</span></div>
<div class="t" style="left:343px;top:155.1px"><span style="display:inline-block;transform:scaleX(1.037);transform-origin:0 50%">Pilih/klik item pada struktur project untuk menampilkan detail item</span></div>
<div class="a" style="left:328px;top:172px;width:945px;height:514px;background:#fff;border-top:1px solid #a0a0a0;border-left:1px solid #a0a0a0"></div>
<div class="t" style="left:340px;top:189.1px;font-size:14.5px;font-weight:bold"><span style="display:inline-block;transform:scaleX(0.91);transform-origin:0 50%">PEKERJAAN STRUKTUR</span></div>
<div class="a" style="left:341px;top:220px;width:670px;height:451px;background:#fff;border:1px solid #6e6e6e"></div>
<div class="a" style="left:341px;top:220px;width:686px;height:1px;background:#5e5e5e"></div>
<div class="a" style="left:342px;top:221px;width:667px;height:43px;background:#f0f0f0;border-bottom:1px solid #8a8a8a"></div>
<div class="a" style="left:388px;top:221px;width:1px;height:42px;background:#a0a0a0"></div>
<div class="a" style="left:388px;top:264px;width:1px;height:366.56px;background:#ebebeb"></div>
<div class="a" style="left:606px;top:221px;width:1px;height:42px;background:#a0a0a0"></div>
<div class="a" style="left:606px;top:264px;width:1px;height:366.56px;background:#ebebeb"></div>
<div class="a" style="left:681px;top:221px;width:1px;height:42px;background:#a0a0a0"></div>
<div class="a" style="left:681px;top:264px;width:1px;height:366.56px;background:#ebebeb"></div>
<div class="a" style="left:747px;top:221px;width:1px;height:42px;background:#a0a0a0"></div>
<div class="a" style="left:747px;top:264px;width:1px;height:366.56px;background:#ebebeb"></div>
<div class="a" style="left:869px;top:221px;width:1px;height:42px;background:#a0a0a0"></div>
<div class="a" style="left:869px;top:264px;width:1px;height:366.56px;background:#ebebeb"></div>
<div class="a" style="left:342px;top:284.56px;width:667px;height:1px;background:#ebebeb"></div>
<div class="a" style="left:342px;top:306.12px;width:667px;height:1px;background:#ebebeb"></div>
<div class="a" style="left:342px;top:327.69px;width:667px;height:1px;background:#ebebeb"></div>
<div class="a" style="left:342px;top:349.25px;width:667px;height:1px;background:#ebebeb"></div>
<div class="a" style="left:342px;top:370.81px;width:667px;height:1px;background:#ebebeb"></div>
<div class="a" style="left:342px;top:392.38px;width:667px;height:1px;background:#ebebeb"></div>
<div class="a" style="left:342px;top:413.94px;width:667px;height:1px;background:#ebebeb"></div>
<div class="a" style="left:342px;top:435.5px;width:667px;height:1px;background:#ebebeb"></div>
<div class="a" style="left:342px;top:457.06px;width:667px;height:1px;background:#ebebeb"></div>
<div class="a" style="left:342px;top:478.62px;width:667px;height:1px;background:#ebebeb"></div>
<div class="a" style="left:342px;top:500.19px;width:667px;height:1px;background:#ebebeb"></div>
<div class="a" style="left:342px;top:521.75px;width:667px;height:1px;background:#ebebeb"></div>
<div class="a" style="left:342px;top:543.31px;width:667px;height:1px;background:#ebebeb"></div>
<div class="a" style="left:342px;top:564.88px;width:667px;height:1px;background:#ebebeb"></div>
<div class="a" style="left:342px;top:586.44px;width:667px;height:1px;background:#ebebeb"></div>
<div class="a" style="left:342px;top:608px;width:667px;height:1px;background:#ebebeb"></div>
<div class="a" style="left:342px;top:629.56px;width:667px;height:1px;background:#ebebeb"></div>
<div class="t" style="left:341px;top:236.9px;width:47px;text-align:center;font-weight:bold"><span style="display:inline-block;transform:scaleX(0.95);transform-origin:50% 50%">NO.</span></div>
<div class="t" style="left:388px;top:236.9px;width:218px;text-align:center;font-weight:bold"><span style="display:inline-block;transform:scaleX(0.925);transform-origin:50% 50%">URAIAN PEKERJAAN</span></div>
<div class="t" style="left:606px;top:236.9px;width:75px;text-align:center;font-weight:bold"><span style="display:inline-block;transform:scaleX(0.969);transform-origin:50% 50%">VOLUME</span></div>
<div class="t" style="left:681px;top:236.9px;width:66px;text-align:center;font-weight:bold"><span style="display:inline-block;transform:scaleX(0.95);transform-origin:50% 50%">SATUAN</span></div>
<div class="t" style="left:747px;top:229px;width:122px;text-align:center;font-weight:bold;line-height:13.8px"><span style="display:inline-block;transform:scaleX(0.97);transform-origin:50% 50%">HARGA<br>SATUAN</span></div>
<div class="t" style="left:869px;top:229px;width:140px;text-align:center;font-weight:bold;line-height:13.8px"><span style="display:inline-block;transform:scaleX(0.97);transform-origin:50% 50%">JUMLAH<br>HARGA</span></div>
<div class="a" style="left:388px;top:264px;width:219px;height:21.56px;background:#99d1ff"></div>
<div class="t" style="left:392px;top:264.5px;font-weight:bold;line-height:21.56px"><span style="display:inline-block;transform:scaleX(0.985);transform-origin:0 50%">Pekerjaan Sub Struktur</span></div>
<div class="t" style="left:341px;top:286.06px;width:47px;text-align:center;line-height:21.56px"><span style="display:inline-block;transform:scaleX(0.985);transform-origin:50% 50%">1</span></div>
<div class="t" style="left:392px;top:286.06px;line-height:21.56px"><span style="display:inline-block;transform:scaleX(0.985);transform-origin:0 50%">Beton tumbuk bawah lantai 1PC:3PC</span></div>
<div class="t" style="left:606px;top:286.06px;width:73px;text-align:right;line-height:21.56px"><span style="display:inline-block;transform:scaleX(0.91);transform-origin:100% 50%">8,08</span></div>
<div class="t" style="left:681px;top:286.06px;width:66px;text-align:center;line-height:21.56px"><span style="display:inline-block;transform:scaleX(0.985);transform-origin:50% 50%">m3</span></div>
<div class="t" style="left:747px;top:286.06px;width:120px;text-align:right;line-height:21.56px"><span style="display:inline-block;transform:scaleX(0.91);transform-origin:100% 50%">959.358,00</span></div>
<div class="t" style="left:869px;top:286.06px;width:138.5px;text-align:right;line-height:21.56px"><span style="display:inline-block;transform:scaleX(0.91);transform-origin:100% 50%">7.751.612,64</span></div>
<div class="t" style="left:341px;top:307.62px;width:47px;text-align:center;line-height:21.56px"><span style="display:inline-block;transform:scaleX(0.985);transform-origin:50% 50%">2</span></div>
<div class="t" style="left:392px;top:307.62px;line-height:21.56px"><span style="display:inline-block;transform:scaleX(0.985);transform-origin:0 50%">Pondasi poer plat P1</span></div>
<div class="t" style="left:406px;top:329.19px;line-height:21.56px"><span style="display:inline-block;transform:scaleX(0.985);transform-origin:0 50%">Beton K-200</span></div>
<div class="t" style="left:606px;top:329.19px;width:73px;text-align:right;line-height:21.56px"><span style="display:inline-block;transform:scaleX(0.91);transform-origin:100% 50%">4,32</span></div>
<div class="t" style="left:681px;top:329.19px;width:66px;text-align:center;line-height:21.56px"><span style="display:inline-block;transform:scaleX(0.985);transform-origin:50% 50%">m3</span></div>
<div class="t" style="left:747px;top:329.19px;width:120px;text-align:right;line-height:21.56px"><span style="display:inline-block;transform:scaleX(0.91);transform-origin:100% 50%">1.260.906,15</span></div>
<div class="t" style="left:869px;top:329.19px;width:138.5px;text-align:right;line-height:21.56px"><span style="display:inline-block;transform:scaleX(0.91);transform-origin:100% 50%">5.447.114,568</span></div>
<div class="t" style="left:406px;top:350.75px;line-height:21.56px"><span style="display:inline-block;transform:scaleX(0.985);transform-origin:0 50%">Pembesian</span></div>
<div class="t" style="left:606px;top:350.75px;width:73px;text-align:right;line-height:21.56px"><span style="display:inline-block;transform:scaleX(0.91);transform-origin:100% 50%">325,05</span></div>
<div class="t" style="left:681px;top:350.75px;width:66px;text-align:center;line-height:21.56px"><span style="display:inline-block;transform:scaleX(0.985);transform-origin:50% 50%">Kg</span></div>
<div class="t" style="left:747px;top:350.75px;width:120px;text-align:right;line-height:21.56px"><span style="display:inline-block;transform:scaleX(0.91);transform-origin:100% 50%">16.075,95</span></div>
<div class="t" style="left:869px;top:350.75px;width:138.5px;text-align:right;line-height:21.56px"><span style="display:inline-block;transform:scaleX(0.91);transform-origin:100% 50%">5.225.487,5475</span></div>
<div class="t" style="left:406px;top:372.31px;line-height:21.56px"><span style="display:inline-block;transform:scaleX(0.985);transform-origin:0 50%">Bekisting pondasi telapak</span></div>
<div class="t" style="left:606px;top:372.31px;width:73px;text-align:right;line-height:21.56px"><span style="display:inline-block;transform:scaleX(0.91);transform-origin:100% 50%">14,40</span></div>
<div class="t" style="left:681px;top:372.31px;width:66px;text-align:center;line-height:21.56px"><span style="display:inline-block;transform:scaleX(0.985);transform-origin:50% 50%">m2</span></div>
<div class="t" style="left:747px;top:372.31px;width:120px;text-align:right;line-height:21.56px"><span style="display:inline-block;transform:scaleX(0.91);transform-origin:100% 50%">219.681,00</span></div>
<div class="t" style="left:869px;top:372.31px;width:138.5px;text-align:right;line-height:21.56px"><span style="display:inline-block;transform:scaleX(0.91);transform-origin:100% 50%">3.163.406,40</span></div>
<div class="t" style="left:341px;top:393.88px;width:47px;text-align:center;line-height:21.56px"><span style="display:inline-block;transform:scaleX(0.985);transform-origin:50% 50%">3</span></div>
<div class="t" style="left:392px;top:393.88px;line-height:21.56px"><span style="display:inline-block;transform:scaleX(0.985);transform-origin:0 50%">Pondasi poer plat P2</span></div>
<div class="t" style="left:406px;top:415.44px;line-height:21.56px"><span style="display:inline-block;transform:scaleX(0.985);transform-origin:0 50%">Beton K-200</span></div>
<div class="t" style="left:606px;top:415.44px;width:73px;text-align:right;line-height:21.56px"><span style="display:inline-block;transform:scaleX(0.91);transform-origin:100% 50%">0,43</span></div>
<div class="t" style="left:681px;top:415.44px;width:66px;text-align:center;line-height:21.56px"><span style="display:inline-block;transform:scaleX(0.985);transform-origin:50% 50%">m3</span></div>
<div class="t" style="left:747px;top:415.44px;width:120px;text-align:right;line-height:21.56px"><span style="display:inline-block;transform:scaleX(0.91);transform-origin:100% 50%">1.260.906,15</span></div>
<div class="t" style="left:869px;top:415.44px;width:138.5px;text-align:right;line-height:21.56px"><span style="display:inline-block;transform:scaleX(0.91);transform-origin:100% 50%">542.189,6445</span></div>
<div class="t" style="left:406px;top:437px;line-height:21.56px"><span style="display:inline-block;transform:scaleX(0.985);transform-origin:0 50%">Pembesian</span></div>
<div class="t" style="left:606px;top:437px;width:73px;text-align:right;line-height:21.56px"><span style="display:inline-block;transform:scaleX(0.91);transform-origin:100% 50%">30,34</span></div>
<div class="t" style="left:681px;top:437px;width:66px;text-align:center;line-height:21.56px"><span style="display:inline-block;transform:scaleX(0.985);transform-origin:50% 50%">Kg</span></div>
<div class="t" style="left:747px;top:437px;width:120px;text-align:right;line-height:21.56px"><span style="display:inline-block;transform:scaleX(0.91);transform-origin:100% 50%">16.075,95</span></div>
<div class="t" style="left:869px;top:437px;width:138.5px;text-align:right;line-height:21.56px"><span style="display:inline-block;transform:scaleX(0.91);transform-origin:100% 50%">487.744,323</span></div>
<div class="t" style="left:406px;top:458.56px;line-height:21.56px"><span style="display:inline-block;transform:scaleX(0.985);transform-origin:0 50%">Bekisting pondasi telapak</span></div>
<div class="t" style="left:606px;top:458.56px;width:73px;text-align:right;line-height:21.56px"><span style="display:inline-block;transform:scaleX(0.91);transform-origin:100% 50%">1,74</span></div>
<div class="t" style="left:681px;top:458.56px;width:66px;text-align:center;line-height:21.56px"><span style="display:inline-block;transform:scaleX(0.985);transform-origin:50% 50%">m2</span></div>
<div class="t" style="left:747px;top:458.56px;width:120px;text-align:right;line-height:21.56px"><span style="display:inline-block;transform:scaleX(0.91);transform-origin:100% 50%">219.681,00</span></div>
<div class="t" style="left:869px;top:458.56px;width:138.5px;text-align:right;line-height:21.56px"><span style="display:inline-block;transform:scaleX(0.91);transform-origin:100% 50%">382.244,94</span></div>
<div class="t" style="left:392px;top:480.12px;font-weight:bold;line-height:21.56px"><span style="display:inline-block;transform:scaleX(0.985);transform-origin:0 50%">Pekerjaan Struktur Lt. Dasar (TOC -0.00)</span></div>
<div class="t" style="left:341px;top:501.69px;width:47px;text-align:center;line-height:21.56px"><span style="display:inline-block;transform:scaleX(0.985);transform-origin:50% 50%">4</span></div>
<div class="t" style="left:392px;top:501.69px;line-height:21.56px"><span style="display:inline-block;transform:scaleX(0.985);transform-origin:0 50%">Balok sloof/tie beam S1 15/35</span></div>
<div class="t" style="left:406px;top:523.25px;line-height:21.56px"><span style="display:inline-block;transform:scaleX(0.985);transform-origin:0 50%">Beton K-200</span></div>
<div class="t" style="left:606px;top:523.25px;width:73px;text-align:right;line-height:21.56px"><span style="display:inline-block;transform:scaleX(0.91);transform-origin:100% 50%">2,28</span></div>
<div class="t" style="left:681px;top:523.25px;width:66px;text-align:center;line-height:21.56px"><span style="display:inline-block;transform:scaleX(0.985);transform-origin:50% 50%">m3</span></div>
<div class="t" style="left:747px;top:523.25px;width:120px;text-align:right;line-height:21.56px"><span style="display:inline-block;transform:scaleX(0.91);transform-origin:100% 50%">1.260.906,15</span></div>
<div class="t" style="left:869px;top:523.25px;width:138.5px;text-align:right;line-height:21.56px"><span style="display:inline-block;transform:scaleX(0.91);transform-origin:100% 50%">2.874.866,022</span></div>
<div class="t" style="left:406px;top:544.81px;line-height:21.56px"><span style="display:inline-block;transform:scaleX(0.985);transform-origin:0 50%">Pembesian</span></div>
<div class="t" style="left:606px;top:544.81px;width:73px;text-align:right;line-height:21.56px"><span style="display:inline-block;transform:scaleX(0.91);transform-origin:100% 50%">453,10</span></div>
<div class="t" style="left:681px;top:544.81px;width:66px;text-align:center;line-height:21.56px"><span style="display:inline-block;transform:scaleX(0.985);transform-origin:50% 50%">Kg</span></div>
<div class="t" style="left:747px;top:544.81px;width:120px;text-align:right;line-height:21.56px"><span style="display:inline-block;transform:scaleX(0.91);transform-origin:100% 50%">16.075,95</span></div>
<div class="t" style="left:869px;top:544.81px;width:138.5px;text-align:right;line-height:21.56px"><span style="display:inline-block;transform:scaleX(0.91);transform-origin:100% 50%">7.284.012,945</span></div>
<div class="t" style="left:406px;top:566.38px;line-height:21.56px"><span style="display:inline-block;transform:scaleX(0.985);transform-origin:0 50%">Bekisting sloof</span></div>
<div class="t" style="left:606px;top:566.38px;width:73px;text-align:right;line-height:21.56px"><span style="display:inline-block;transform:scaleX(0.91);transform-origin:100% 50%">30,36</span></div>
<div class="t" style="left:681px;top:566.38px;width:66px;text-align:center;line-height:21.56px"><span style="display:inline-block;transform:scaleX(0.985);transform-origin:50% 50%">m2</span></div>
<div class="t" style="left:747px;top:566.38px;width:120px;text-align:right;line-height:21.56px"><span style="display:inline-block;transform:scaleX(0.91);transform-origin:100% 50%">230.681,00</span></div>
<div class="t" style="left:869px;top:566.38px;width:138.5px;text-align:right;line-height:21.56px"><span style="display:inline-block;transform:scaleX(0.91);transform-origin:100% 50%">7.003.475,16</span></div>
<div class="t" style="left:341px;top:587.94px;width:47px;text-align:center;line-height:21.56px"><span style="display:inline-block;transform:scaleX(0.985);transform-origin:50% 50%">5</span></div>
<div class="t" style="left:392px;top:587.94px;line-height:21.56px"><span style="display:inline-block;transform:scaleX(0.985);transform-origin:0 50%">Balok sloof 15/20</span></div>
<div class="t" style="left:406px;top:609.5px;line-height:21.56px"><span style="display:inline-block;transform:scaleX(0.985);transform-origin:0 50%">Beton K-200</span></div>
<div class="t" style="left:606px;top:609.5px;width:73px;text-align:right;line-height:21.56px"><span style="display:inline-block;transform:scaleX(0.91);transform-origin:100% 50%">0,48</span></div>
<div class="t" style="left:681px;top:609.5px;width:66px;text-align:center;line-height:21.56px"><span style="display:inline-block;transform:scaleX(0.985);transform-origin:50% 50%">m3</span></div>
<div class="t" style="left:747px;top:609.5px;width:120px;text-align:right;line-height:21.56px"><span style="display:inline-block;transform:scaleX(0.91);transform-origin:100% 50%">1.260.906,15</span></div>
<div class="t" style="left:869px;top:609.5px;width:138.5px;text-align:right;line-height:21.56px"><span style="display:inline-block;transform:scaleX(0.91);transform-origin:100% 50%">605.234,952</span></div>
<div class="a" style="left:342px;top:630.06px;width:667px;height:22.44px;background:#f0f0f0;border-top:1px solid #8a8a8a;border-bottom:1px solid #8a8a8a"></div>
<div class="a" style="left:388px;top:630.56px;width:1px;height:21.44px;background:#a0a0a0"></div>
<div class="a" style="left:606px;top:630.56px;width:1px;height:21.44px;background:#a0a0a0"></div>
<div class="a" style="left:681px;top:630.56px;width:1px;height:21.44px;background:#a0a0a0"></div>
<div class="a" style="left:747px;top:630.56px;width:1px;height:21.44px;background:#a0a0a0"></div>
<div class="a" style="left:869px;top:630.56px;width:1px;height:21.44px;background:#a0a0a0"></div>
<div class="t" style="left:747px;top:631.06px;width:120px;text-align:right;font-weight:bold;line-height:21.44px"><span style="display:inline-block;transform:scaleX(0.952);transform-origin:100% 50%">JUMLAH</span></div>
<div class="t" style="left:869px;top:631.06px;width:138.5px;text-align:right;font-weight:bold;line-height:21.44px"><span style="display:inline-block;transform:scaleX(1.037);transform-origin:100% 50%">43.341.791,104</span></div>
<div class="a" style="left:342px;top:653px;width:667px;height:17px;background:#f0f0f0"></div>
<div class="a" style="left:1010px;top:221px;width:16px;height:450px;background:#f0f0f0"></div>
<div class="a" style="left:1009px;top:221px;width:1px;height:42px;background:#8a8a8a"></div>
<div class="a" style="left:1011px;top:237px;width:14px;height:16px;background:#cdcdcd"></div>
<svg class="a" style="left:1013px;top:228px" width="10" height="6" viewBox="0 0 10 6"><path d="M0.8 5.2L5 1 9.2 5.2" fill="none" stroke="#303030" stroke-width="1.7"/></svg>
<svg class="a" style="left:1013px;top:660px" width="10" height="6" viewBox="0 0 10 6"><path d="M0.8 0.8L5 5 9.2 0.8" fill="none" stroke="#303030" stroke-width="1.7"/></svg>
<div class="a" style="left:1027px;top:219px;width:6px;height:452px;background:#f5f5f5"></div>
<div class="a" style="left:1028px;top:436px;width:6px;height:22px;background:#fbfbfb"></div>
<div class="a" style="left:1029px;top:437px;width:4px;height:20px;background:linear-gradient(90deg,transparent 50%,#d8d8d8 50%),linear-gradient(transparent 50%,#d8d8d8 50%),#333;background-size:2px 2px"></div>
<div class="a" style="left:1052px;top:234px;width:83px;height:21.5px;background:#e1e1e1;border:1px solid #adadad"></div>
<div class="t" style="left:1052px;top:235.5px;width:83px;text-align:center;line-height:21.5px"><span style="display:inline-block;transform:scaleX(0.985);transform-origin:50% 50%">Add</span></div>
<div class="a" style="left:1052px;top:263.2px;width:83px;height:21.5px;background:#e1e1e1;border:1px solid #adadad"></div>
<div class="t" style="left:1052px;top:264.7px;width:83px;text-align:center;line-height:21.5px"><span style="display:inline-block;transform:scaleX(0.985);transform-origin:50% 50%">Edit</span></div>
<div class="a" style="left:1052px;top:292.4px;width:83px;height:21.5px;background:#e1e1e1;border:1px solid #adadad"></div>
<div class="t" style="left:1052px;top:293.9px;width:83px;text-align:center;line-height:21.5px"><span style="display:inline-block;transform:scaleX(0.985);transform-origin:50% 50%">Delete</span></div>
<div class="a" style="left:1052px;top:321.6px;width:83px;height:21.5px;background:#e1e1e1;border:1px solid #adadad"></div>
<div class="t" style="left:1052px;top:323.1px;width:83px;text-align:center;line-height:21.5px"><span style="display:inline-block;transform:scaleX(0.985);transform-origin:50% 50%">View Item</span></div>
<div class="a" style="left:0px;top:697px;width:1280px;height:23px;background:#f0f0f0;border-top:1px solid #e3e3e3"></div>
<div class="a" style="left:629px;top:692px;width:23px;height:6px;background:#fafafa"></div>
<div class="a" style="left:630px;top:693px;width:20px;height:4px;background:linear-gradient(90deg,transparent 50%,#d8d8d8 50%),linear-gradient(transparent 50%,#d8d8d8 50%),#333;background-size:2px 2px"></div>
<div class="t" style="left:2px;top:704.6px"><span style="display:inline-block;transform:scaleX(0.985);transform-origin:0 50%">Ready</span></div>
<div class="a" style="left:768px;top:698px;width:1px;height:22px;background:#d7d7d7"></div>
<div class="a" style="left:786px;top:698px;width:1px;height:22px;background:#d7d7d7"></div>
<div class="a" style="left:1112px;top:698px;width:1px;height:22px;background:#d7d7d7"></div>
<div class="a" style="left:1232px;top:698px;width:1px;height:22px;background:#d7d7d7"></div>
<div class="t" style="left:776px;top:704.6px"><span style="display:inline-block;transform:scaleX(0.985);transform-origin:0 50%">*</span></div>
<div class="t" style="left:791.5px;top:704.6px"><span style="display:inline-block;transform:scaleX(1.013);transform-origin:0 50%">D:\MyDocuments\Project\Rumah-Aris.rab</span></div>
<div class="t" style="left:1121px;top:704.6px"><span style="display:inline-block;transform:scaleX(0.975);transform-origin:0 50%">RAB Project Manager</span></div>
<div class="t" style="left:1238px;top:704.6px"><span style="display:inline-block;transform:scaleX(0.985);transform-origin:0 50%">1.0.1</span></div>
</body></html>
